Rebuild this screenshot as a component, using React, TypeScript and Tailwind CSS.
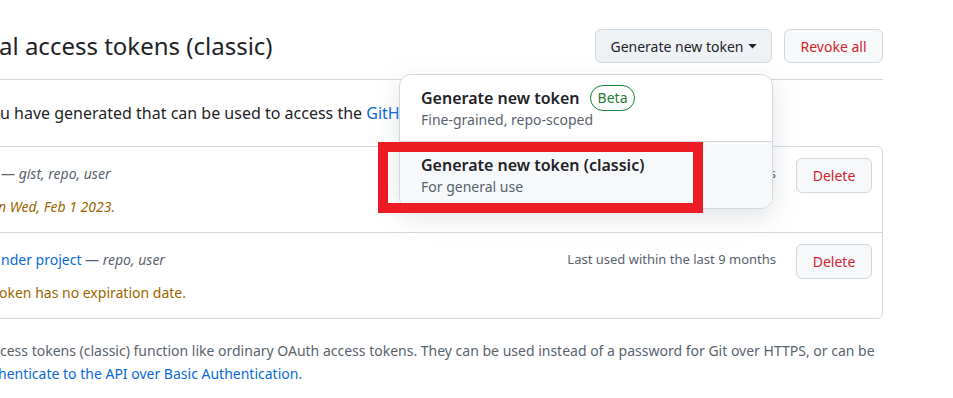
import React from 'react';

const font = { fontFamily: '"Noto Sans", "Liberation Sans", sans-serif' };

const DeleteButton = () => (
    <button className="h-[35px] w-[76px] rounded-md border border-[#d1d9e0] bg-[#f6f8fa] text-[14px] text-[#d1242f] shrink-0">
        Delete
    </button>
);

const TokenRow = ({ name, scopes, note, noteItalic, lastUsed, last }: { name?: string; scopes: string; note: string; noteItalic?: boolean; lastUsed: string; last?: boolean }) => (
    <div className={`flex justify-between pl-[16px] pr-[10px] pt-[16px] pb-[15px] ${last ? '' : 'border-b border-[#d1d9e0]'}`}>
        <div className="flex flex-col">
            <div className="h-[21px] leading-[21px] text-[14px] whitespace-nowrap">
                {name && <a className="text-[#0969da]">{name}</a>}
                {name ? ' ' : ''}
                <span className="text-[#59636e]">— </span>
                <span className="italic text-[#59636e]">{scopes}</span>
            </div>
            <div className={`mt-[12px] h-[21px] leading-[21px] text-[14px] text-[#9a6700] whitespace-nowrap ${noteItalic ? 'italic -ml-[3px]' : '-ml-[2px]'}`}>
                {note}
            </div>
        </div>
        <div className="flex items-start gap-[20px]">
            <span className="leading-[21px] text-[13px] text-[#59636e] whitespace-nowrap">{lastUsed}</span>
            <div className="-mt-[5px]"><DeleteButton /></div>
        </div>
    </div>
);

export default function App() {
    return (
        <div className="relative w-[953px] h-[398px] overflow-hidden bg-white text-[#1f2328]" style={font}>
            <div className="w-[899px] -ml-[16px]">
                <div className="flex items-center justify-between pt-[29px] pb-[16px] border-b border-[#d1d9e0] pl-[16px]">
                    <h2 className="text-[24px] font-normal leading-[34px] -ml-[1px] whitespace-nowrap">al access tokens (classic)</h2>
                    <div className="flex items-center gap-[12px]">
                        <button className="h-[34px] w-[177px] rounded-md border border-[#d1d9e0] bg-[#eff2f5] text-[14px] flex items-center justify-center gap-[4px]">
                            Generate new token
                            <svg width="9" height="5" viewBox="0 0 10 6" className="mt-[1px]"><path d="M0 0h10L5 5.5z" fill="#1f2328" /></svg>
                        </button>
                        <button className="h-[34px] w-[99px] rounded-md border border-[#d1d9e0] bg-[#f6f8fa] text-[14px] text-[#d1242f]">
                            Revoke all
                        </button>
                    </div>
                </div>

                <p className="pl-[16px] mt-[21px] text-[16px] leading-[24px] whitespace-nowrap">
                    u have generated that can be used to access the <a className="text-[#0969da]">GitHub API</a>.
                </p>

                <div className="mt-[21px] rounded-md border border-[#d1d9e0]">
                    <TokenRow scopes="gist, repo, user" note="n Wed, Feb 1 2023." noteItalic lastUsed="Last used within the last 2 weeks" />
                    <TokenRow name="nder project" scopes="repo, user" note="oken has no expiration date." lastUsed="Last used within the last 9 months" last />
                </div>

                <p className="pl-[16px] mt-[20px] text-[14px] leading-[23px] text-[#59636e] whitespace-nowrap">
                    cess tokens (classic) function like ordinary OAuth access tokens. They can be used instead of a password for Git over HTTPS, or can be
                    <br />
                    <a className="text-[#0969da] -ml-[2px]">henticate to the API over Basic Authentication</a>.
                </p>
            </div>

            {/* dropdown menu */}
            <div className="absolute left-[399px] top-[74px] w-[374px] rounded-[12px] border border-[#d1d9e0] bg-white shadow-[0_8px_24px_rgba(140,149,159,0.25)] overflow-hidden">
                <div className="pl-[21px] pt-[11px] pb-[11px] border-b border-[#d1d9e0]">
                    <div className="flex items-center gap-[10px] h-[24px]">
                        <span className="text-[16px] font-semibold">Generate new token</span>
                        <span className="h-[26px] px-[7px] rounded-full border border-[#1a7f37] text-[#1a7f37] text-[14px] leading-[24px]">Beta</span>
                    </div>
                    <div className="text-[14px] leading-[20px] text-[#59636e]">Fine-grained, repo-scoped</div>
                </div>
                <div className="pl-[21px] pt-[11px] pb-[11px] bg-[#f6f8fa]">
                    <div className="h-[24px] leading-[24px] text-[16px] font-semibold">Generate new token (classic)</div>
                    <div className="text-[14px] leading-[20px] text-[#59636e]">For general use</div>
                </div>
            </div>

            {/* highlight */}
            <div className="absolute left-[378px] top-[142px] w-[325px] h-[71px] border-[10px] border-[#ed1c24]" />
        </div>
    );
}
